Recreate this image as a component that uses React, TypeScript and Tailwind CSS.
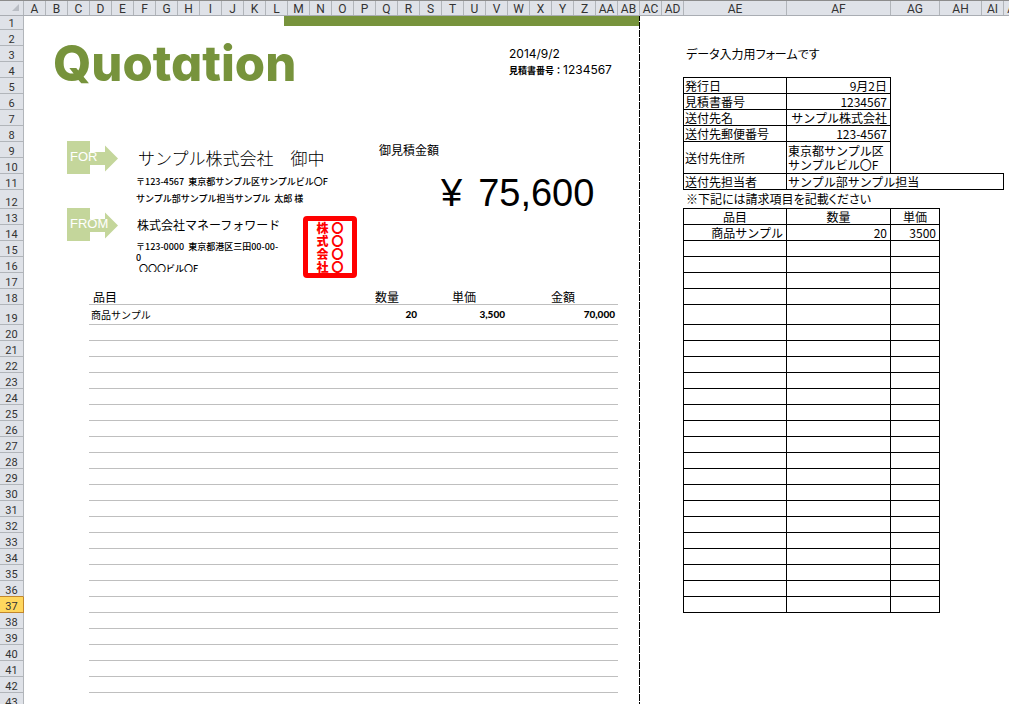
const LETTERS = 'ABCDEFGHIJKLMNOPQRSTUVWXYZ'.split('')

const COLUMNS = [
  ...[...LETTERS, 'AA', 'AB', 'AC', 'AD'].map((name) => ({ name, width: 'w-[22px]' })),
  { name: 'AE', width: 'w-[103px]' },
  { name: 'AF', width: 'w-[104px]' },
  { name: 'AG', width: 'w-[49px]' },
  { name: 'AH', width: 'w-[42px]' },
  { name: 'AI', width: 'w-[22px]' },
  { name: 'AJ', width: 'w-[22px]' },
]

const ROWS = Array.from({ length: 43 }, (_, i) => i + 1)
const SELECTED_ROW = 37

const ROW_HEIGHTS: Record<number, string> = {
  1: 'h-[14px]',
  12: 'h-[19px]',
  19: 'h-5',
}

const QUOTE_ROWS = [
  { item: '商品サンプル', qty: '20', price: '3,500', total: '70,000' },
  ...Array.from({ length: 24 }, () => ({ item: '', qty: '', price: '', total: '' })),
]

const FORM_ROWS = [
  { item: '商品サンプル', qty: '20', price: '3500' },
  ...Array.from({ length: 23 }, () => ({ item: '', qty: '', price: '' })),
]

const INFO = [
  { label: '発行日', value: '9月2日' },
  { label: '見積書番号', value: '1234567' },
  { label: '送付先名', value: 'サンプル株式会社' },
  { label: '送付先郵便番号', value: '123-4567' },
]

function ColumnHeader() {
  return (
    <div className="flex h-4 shrink-0 overflow-hidden border-t border-b border-t-[#8c8c8c] border-b-[#a9adb3] bg-[#dfe2e8] font-[Roboto,sans-serif] text-xs leading-4 text-[#333]">
      <div className="flex w-6 shrink-0 items-end justify-end border-r border-[#b1b5ba] p-1">
        <svg viewBox="0 0 7 7" className="h-[7px] w-[7px]">
          <path d="M7 0V7H0Z" fill="#b9bdc4" />
        </svg>
      </div>
      {COLUMNS.map((col) => (
        <div key={col.name} className={`${col.width} flex shrink-0 justify-center border-r border-[#b1b5ba]`}>
          {col.name}
        </div>
      ))}
    </div>
  )
}

function RowHeader() {
  return (
    <div className="w-6 shrink-0 font-[Roboto,sans-serif] text-[11px] leading-[11px] text-[#333]">
      {ROWS.map((row) => (
        <div
          key={row}
          className={`${ROW_HEIGHTS[row] ?? 'h-4'} flex items-end justify-center border-r border-b ${
            row === SELECTED_ROW
              ? 'border-[#c2872d] bg-[#ffd75e]'
              : row === SELECTED_ROW - 1
                ? 'border-r-[#b1b5ba] border-b-[#c2872d] bg-[#dfe2e8]'
                : 'border-[#b1b5ba] bg-[#dfe2e8]'
          }`}
        >
          {row}
        </div>
      ))}
    </div>
  )
}

function ArrowTag({ label }: { label: string }) {
  return (
    <div className="relative h-[33px] w-[51px] shrink-0">
      <svg viewBox="0 0 51 33" className="h-full w-full">
        <path d="M0 0H23V11H38V4.5L51 17.5L38 30.5V24H23V33H0Z" fill="#c4d69b" />
      </svg>
      <span className="absolute top-2 left-[3px] font-['Liberation_Sans',sans-serif] text-[13px] leading-4 text-white">
        {label}
      </span>
    </div>
  )
}

function Stamp() {
  return (
    <div className="mt-2 flex h-[62px] w-[54px] shrink-0 justify-center gap-[3px] rounded-[4px] border-[5px] border-[#f00] bg-white text-xs leading-[13px] font-black text-[#f00]">
      <span className="w-3 break-all">株式会社</span>
      <span className="w-3 break-all">〇〇〇〇</span>
    </div>
  )
}

function Quotation() {
  return (
    <main className="flex w-[616px] shrink-0">
      <div className="flex min-w-0 flex-1 flex-col">
        <div className="ml-[260px] h-[10px] shrink-0 bg-[#77933c]" />

        <header className="flex h-[115px] shrink-0 justify-between pr-[26px] pl-[29px]">
          <h1 className="mt-2 font-[Inter,sans-serif] text-[49px] leading-[60px] font-extrabold text-[#77933c] [font-feature-settings:'cv11']">
            Quotation
          </h1>
          <div className="mt-5 w-[104px] font-[Inter,'Noto_Sans_CJK_JP',sans-serif] text-xs leading-4 whitespace-nowrap">
            <p>2014/9/2</p>
            <p>
              <span className="text-[9px] font-bold">見積書番号：</span>1234567
            </p>
          </div>
        </header>

        {/* Recipient and amount */}
        <section className="flex h-[67px] shrink-0 pl-[43px]">
          <ArrowTag label="FOR" />
          <div className="ml-[18px] w-[243px] text-[9px] leading-[17px] font-medium whitespace-nowrap">
            <p className="mt-1 pl-[2px] text-[17px] leading-[26px] font-light">サンプル株式会社　御中</p>
            <p className="mt-[2px]">〒123-4567&nbsp; 東京都サンプル区サンプルビル〇F</p>
            <p>サンプル部サンプル担当サンプル&nbsp; 太郎 様</p>
          </div>
          <div className="text-xs leading-[18px] whitespace-nowrap">
            <p>御見積金額</p>
            <p className="mt-3 ml-[62px] flex gap-4 font-['Liberation_Sans',sans-serif] text-[38px] leading-[44px]">
              <span>¥</span>
              <span>75,600</span>
            </p>
          </div>
        </section>

        {/* Sender */}
        <section className="flex h-20 shrink-0 pl-[43px]">
          <ArrowTag label="FROM" />
          <div className="ml-[18px] h-16 w-[167px] overflow-hidden text-[9px] leading-[11px] font-medium whitespace-nowrap">
            <p className="mt-2 pl-px text-xs leading-[18px] font-normal">株式会社マネーフォワード</p>
            <p className="mt-[7px]">〒123-0000&nbsp; 東京都港区三田00-00-</p>
            <p>0</p>
            <p className="pl-[3px]">〇〇〇ビル〇F</p>
          </div>
          <Stamp />
        </section>

        <table className="ml-[65px] w-[529px] table-fixed border-separate border-spacing-0 text-xs leading-[15px]">
          <thead>
            <tr className="h-[17px]">
              <th className="w-[265px] border-b border-[#bfbfbf] pl-1 text-left font-normal">品目</th>
              <th className="w-[66px] border-b border-[#bfbfbf] font-normal">数量</th>
              <th className="w-[88px] border-b border-[#bfbfbf] font-normal">単価</th>
              <th className="w-[110px] border-b border-[#bfbfbf] font-normal">金額</th>
            </tr>
          </thead>
          <tbody className="text-right font-[Lato,sans-serif] text-[10px] font-black">
            {QUOTE_ROWS.map((row, i) => (
              <tr key={i} className={i === 0 ? 'h-5' : 'h-4'}>
                <td className="border-b border-[#bfbfbf] pl-[2px] text-left font-['Noto_Sans_CJK_JP',sans-serif] font-normal">
                  {row.item}
                </td>
                <td className="border-b border-[#bfbfbf] pr-[3px]">{row.qty}</td>
                <td className="border-b border-[#bfbfbf] pr-[3px]">{row.price}</td>
                <td className="border-b border-[#bfbfbf] pr-[3px]">{row.total}</td>
              </tr>
            ))}
          </tbody>
        </table>
      </div>
      {/* Page break */}
      <div className="w-px bg-[repeating-linear-gradient(to_bottom,black_0px,black_5px,white_5px,white_6px,black_6px,black_8px)]" />
    </main>
  )
}

function InputForm() {
  return (
    <aside className="min-w-0 flex-1 pl-[43px] text-xs leading-[15px] whitespace-nowrap">
      <p className="mt-[30px] mb-4 pl-[3px] [font-feature-settings:'palt']">データ入力用フォームです</p>
      <table className="w-[321px] table-fixed border-separate border-spacing-0">
        <colgroup>
          <col className="w-[104px]" />
          <col className="w-[104px]" />
          <col className="w-[113px]" />
        </colgroup>
        <tbody>
          {INFO.map((row, i) => (
            <tr key={row.label} className={i === 0 ? 'h-[17px]' : 'h-4'}>
              <th
                scope="row"
                className={`${i === 0 ? 'border' : 'border-x border-b'} border-black pl-px text-left font-normal`}
              >
                {row.label}
              </th>
              <td className={`${i === 0 ? 'border-t' : ''} border-r border-b border-black pr-[3px] text-right`}>
                {row.value}
              </td>
              <td />
            </tr>
          ))}
          <tr className="h-8">
            <th scope="row" className="border-x border-b border-black pl-px text-left font-normal">
              送付先住所
            </th>
            <td className="border-r border-b border-black pl-px leading-[14px]">
              東京都サンプル区
              <br />
              サンプルビル〇F
            </td>
            <td className="border-b border-black" />
          </tr>
          <tr className="h-4">
            <th scope="row" className="border-x border-b border-black pl-px text-left font-normal">
              送付先担当者
            </th>
            <td colSpan={2} className="border-r border-b border-black pl-px">
              サンプル部サンプル担当
            </td>
          </tr>
        </tbody>
      </table>
      <p className="h-[18px] pt-px pl-[3px] [font-feature-settings:'palt']">※下記には請求項目を記載ください</p>
      <table className="w-[257px] table-fixed border-separate border-spacing-0">
        <thead>
          <tr className="h-[17px]">
            <th className="w-[104px] border border-black font-normal">品目</th>
            <th className="w-[104px] border-y border-r border-black font-normal">数量</th>
            <th className="w-[49px] border-y border-r border-black font-normal">単価</th>
          </tr>
        </thead>
        <tbody className="text-right">
          {FORM_ROWS.map((row, i) => (
            <tr key={i} className={i === 5 ? 'h-5' : 'h-4'}>
              <td className="border-x border-b border-black pr-[3px]">{row.item}</td>
              <td className="border-r border-b border-black pr-[3px]">{row.qty}</td>
              <td className="border-r border-b border-black pr-[3px]">{row.price}</td>
            </tr>
          ))}
        </tbody>
      </table>
    </aside>
  )
}

export default function App() {
  return (
    <div
      lang="ja"
      className="flex h-screen flex-col overflow-hidden bg-white font-['Noto_Sans_CJK_JP',sans-serif] text-black"
    >
      <ColumnHeader />
      <div className="flex min-h-0 flex-1 overflow-hidden">
        <RowHeader />
        <Quotation />
        <InputForm />
      </div>
    </div>
  )
}
